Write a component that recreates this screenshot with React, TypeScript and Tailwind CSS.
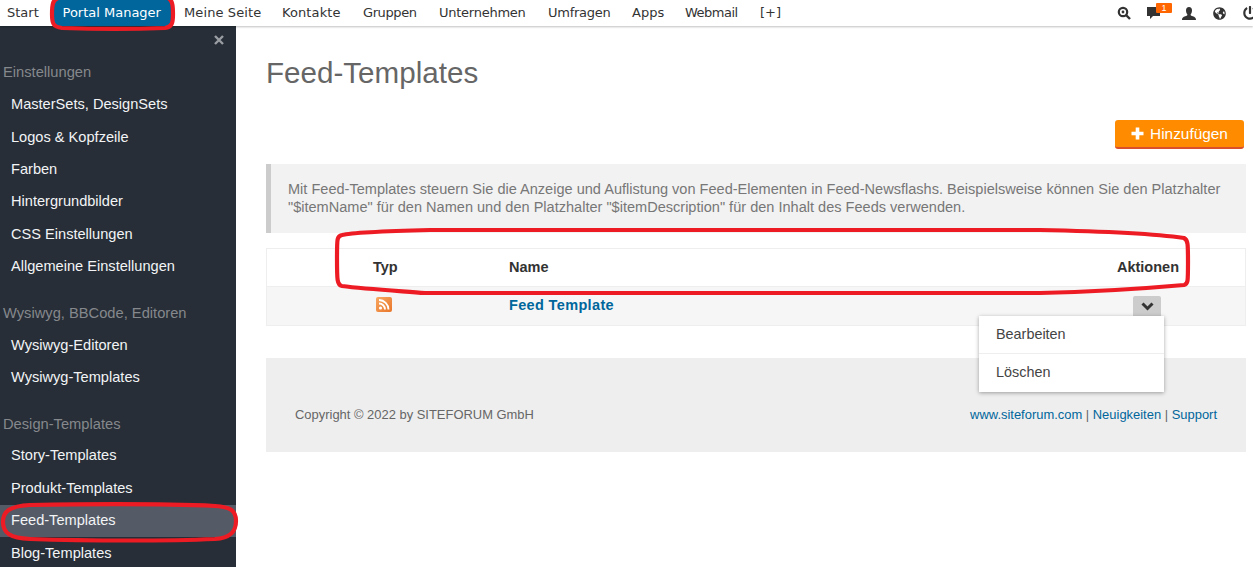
import { FaGlobeAmericas, FaPowerOff } from "react-icons/fa"

const navItems = [
  { label: "Start", cls: "w-[53px] pl-[7px]" },
  { label: "Portal Manager", cls: "w-[120px] pl-[9.5px] bg-[#00669c] text-white" },
  { label: "Meine Seite", cls: "w-[98px] pl-[11px] tracking-[0.1px]" },
  { label: "Kontakte", cls: "w-[81px] pl-[11px] tracking-[0.1px]" },
  { label: "Gruppen", cls: "w-[76px] pl-[11px] tracking-[-0.4px]" },
  { label: "Unternehmen", cls: "w-[109px] pl-[11px] tracking-[-0.25px]" },
  { label: "Umfragen", cls: "w-[84px] pl-[11px] tracking-[-0.25px]" },
  { label: "Apps", cls: "w-[53px] pl-[11px]" },
  { label: "Webmail", cls: "w-[75px] pl-[11px] tracking-[-0.5px]" },
  { label: "[+]", cls: "pl-[11px]" },
]

const sidebar = [
  { title: "Einstellungen", items: ["MasterSets, DesignSets", "Logos & Kopfzeile", "Farben", "Hintergrundbilder", "CSS Einstellungen", "Allgemeine Einstellungen"] },
  { title: "Wysiwyg, BBCode, Editoren", items: ["Wysiwyg-Editoren", "Wysiwyg-Templates"] },
  { title: "Design-Templates", items: ["Story-Templates", "Produkt-Templates", "Feed-Templates", "Blog-Templates"] },
]

function TopNav() {
  return (
    <header className="relative z-10 flex h-[26px] shrink-0 items-center justify-between bg-white shadow-[0_1px_2px_rgba(0,0,0,0.25)] font-['DejaVu_Sans',sans-serif] text-[13px] text-[#333]">
      <nav className="flex h-full">
        {navItems.map((item) => (
          <a key={item.label} className={"flex items-center " + item.cls}>
            {item.label}
          </a>
        ))}
      </nav>
      <div className="flex w-[138px] shrink-0 items-center text-[#333]">
        <svg width="14" height="14" viewBox="0 0 14 14" className="ml-[2px] shrink-0">
          <circle cx="6" cy="6" r="4.2" fill="none" stroke="#333" strokeWidth="2.2" />
          <circle cx="6" cy="6" r="1.4" fill="#333" />
          <path d="M9 9l4 4" stroke="#333" strokeWidth="2.4" />
        </svg>
        <div className="relative ml-[16px] h-[16px] w-[26px] shrink-0">
          <svg width="14" height="14" viewBox="0 0 14 14" className="absolute left-0 top-[1px]">
            <path d="M0 1h13v9H6l-3 3v-3H0z" fill="#333" />
          </svg>
          <span className="absolute left-[9px] top-[-2px] flex h-[10px] w-[16px] items-center justify-center rounded-[1px] bg-[#f60] font-['Liberation_Sans',sans-serif] text-[9px] leading-none text-white">
            1
          </span>
        </div>
        <svg width="14" height="13" viewBox="0 0 14 13" className="ml-[9px] shrink-0">
          <path d="M7 0C9 0 10 1.5 10 3.5C10 5.5 9.2 6.8 8.6 7.4C8.6 8.2 9 8.5 10 8.9C12 9.6 14 10 14 13H0C0 10 2 9.6 4 8.9C5 8.5 5.4 8.2 5.4 7.4C4.8 6.8 4 5.5 4 3.5C4 1.5 5 0 7 0Z" fill="#333" />
        </svg>
        <FaGlobeAmericas size={13} className="ml-[17px] shrink-0" />
        <FaPowerOff size={14} className="ml-[17px] shrink-0" />
      </div>
    </header>
  )
}

function Sidebar() {
  return (
    <aside className="w-[236px] shrink-0 overflow-hidden bg-[#272e37] font-['Liberation_Sans',sans-serif] text-[14.6px]">
      <div className="flex h-[31px] items-start justify-end pr-[12px] pt-[9px]">
        <svg width="10" height="10" viewBox="0 0 10 10">
          <path d="M1 1l8 8M9 1l-8 8" stroke="#9a9ea3" strokeWidth="2.4" />
        </svg>
      </div>
      {sidebar.map((section) => (
        <div key={section.title} className="mb-[14px]">
          <div className="flex h-[32px] items-center pb-[1px] pl-[3px] text-[14.7px] text-[#85888c]">{section.title}</div>
          {section.items.map((item) => (
            <a
              key={item}
              className={
                item === "Feed-Templates"
                  ? "flex h-[32.4px] items-center bg-[#555b66] pl-[11px] text-[#f2f4f6]"
                  : "flex h-[32.4px] items-center pl-[11px] text-[#f2f4f6]"
              }
            >
              {item}
            </a>
          ))}
        </div>
      ))}
    </aside>
  )
}

function Main() {
  return (
    <main className="min-w-0 flex-1 pl-[30px] pr-[7px] font-['Liberation_Sans',sans-serif] text-[14px] text-[#333]">
      <h1 className="mt-[27px] h-[40px] text-[29.6px] leading-[40px] font-normal text-[#666]">Feed-Templates</h1>
      <div className="mt-[27px] flex justify-end pr-[2px]">
        <button className="flex h-[29px] w-[129px] items-center justify-center gap-[6px] rounded-[3px] border-b-2 border-[#d9502a] bg-[#ff8c00] text-[15.4px] text-white">
          <svg width="13" height="13" viewBox="0 0 13 13">
            <path d="M6.5 0.5v12M0.5 6.5h12" stroke="#fff" strokeWidth="3.6" />
          </svg>
          Hinzufügen
        </button>
      </div>
      <div className="mt-[15px] h-[69px] border-l-[5px] border-[#ccc] bg-[#f2f2f2] pl-[17px] pr-[15px] pt-[16px] text-[14.55px] leading-[18px] text-[#777]">
        Mit Feed-Templates steuern Sie die Anzeige und Auflistung von Feed-Elementen in Feed-Newsflashs. Beispielsweise können Sie den Platzhalter "$itemName" für den Namen und den Platzhalter "$itemDescription" für den Inhalt des Feeds verwenden.
      </div>
      <div className="mt-[15px] border border-[#eee]">
        <div className="flex h-[38px] items-center border-b border-[#eee] bg-white text-[14.5px] font-bold">
          <span className="ml-[106px] w-[136px]">Typ</span>
          <span className="flex-1">Name</span>
          <span className="mr-[66px]">Aktionen</span>
        </div>
        <div className="relative flex h-[38px] bg-[#f6f6f6]">
          <div className="ml-[109px] mt-[10px] w-[133px]">
            <svg width="16" height="16" viewBox="0 0 16 16">
              <defs>
                <linearGradient id="rss" x1="0" y1="0" x2="1" y2="1">
                  <stop offset="0" stopColor="#f9a862" />
                  <stop offset="1" stopColor="#e8762a" />
                </linearGradient>
              </defs>
              <rect width="16" height="15" rx="2" fill="url(#rss)" />
              <circle cx="4.5" cy="11" r="1.6" fill="#fff" />
              <path d="M3 6.5a6 6 0 0 1 6 6M3 3a9.5 9.5 0 0 1 9.5 9.5" fill="none" stroke="#fff" strokeWidth="1.8" />
            </svg>
          </div>
          <a className="mt-[9px] text-[14.5px] leading-[18px] font-bold tracking-[0.35px] text-[#00669c]">Feed Template</a>
          <button className="absolute right-[84px] top-[9px] flex h-[21px] w-[28px] items-center justify-center rounded-t-[2px] bg-[#ccc]">
            <svg width="13" height="9" viewBox="0 0 13 9">
              <path d="M1.5 1.5l5 5 5-5" fill="none" stroke="#333" strokeWidth="3" />
            </svg>
          </button>
          <div className="absolute right-[81px] top-[29px] z-10 w-[185px] bg-white text-[14.4px] text-[#444] shadow-[0_1px_4px_rgba(0,0,0,0.35)]">
            <a className="flex h-[38px] items-center border-b border-[#eee] pl-[17px]">Bearbeiten</a>
            <a className="flex h-[38px] items-center pl-[17px]">Löschen</a>
          </div>
        </div>
      </div>
      <footer className="mt-[32px] flex h-[94px] items-center justify-between bg-[#eee] px-[29px] pt-[20px] text-[12.95px] text-[#666]">
        <span>Copyright © 2022 by SITEFORUM GmbH</span>
        <span>
          <a className="text-[#00669c]">www.siteforum.com</a> | <a className="text-[#00669c]">Neuigkeiten</a> | <a className="text-[#00669c]">Support</a>
        </span>
      </footer>
    </main>
  )
}

export default function App() {
  return (
    <div className="relative flex h-[567px] w-[1253px] flex-col overflow-hidden bg-white">
      <TopNav />
      <div className="flex min-h-0 flex-1">
        <Sidebar />
        <Main />
      </div>
      {/* red marker strokes drawn over the screenshot */}
      <svg width="1253" height="567" className="pointer-events-none absolute left-0 top-0 z-20" fill="none" stroke="#ed1c24" strokeWidth="4.2">
        <path d="M58 -2C53 0 52 4 52 14C52 23 53 27 62 28C90 29 140 29 165 28C172 27 173 23 173 14C173 4 172 0 168 -2" />
        <path d="M430 230C390 231 350 233 342 235C337 236 337 238 337 258C337 280 337 285 342 286C365 289 400 291 425 293C600 294 800 294 1040 293C1090 292 1150 288 1184 285C1188 284 1188 282 1188 262C1188 244 1188 240 1184 238C1150 233 1090 231 1040 230C800 229 600 229 430 230Z" />
        <path d="M30 505C10 506 3 511 3 522C3 533 10 538 30 539C90 541 170 541 215 539C230 538 236 532 236 521C236 510 230 507 215 506C170 504 90 504 30 505Z" />
      </svg>
    </div>
  )
}
